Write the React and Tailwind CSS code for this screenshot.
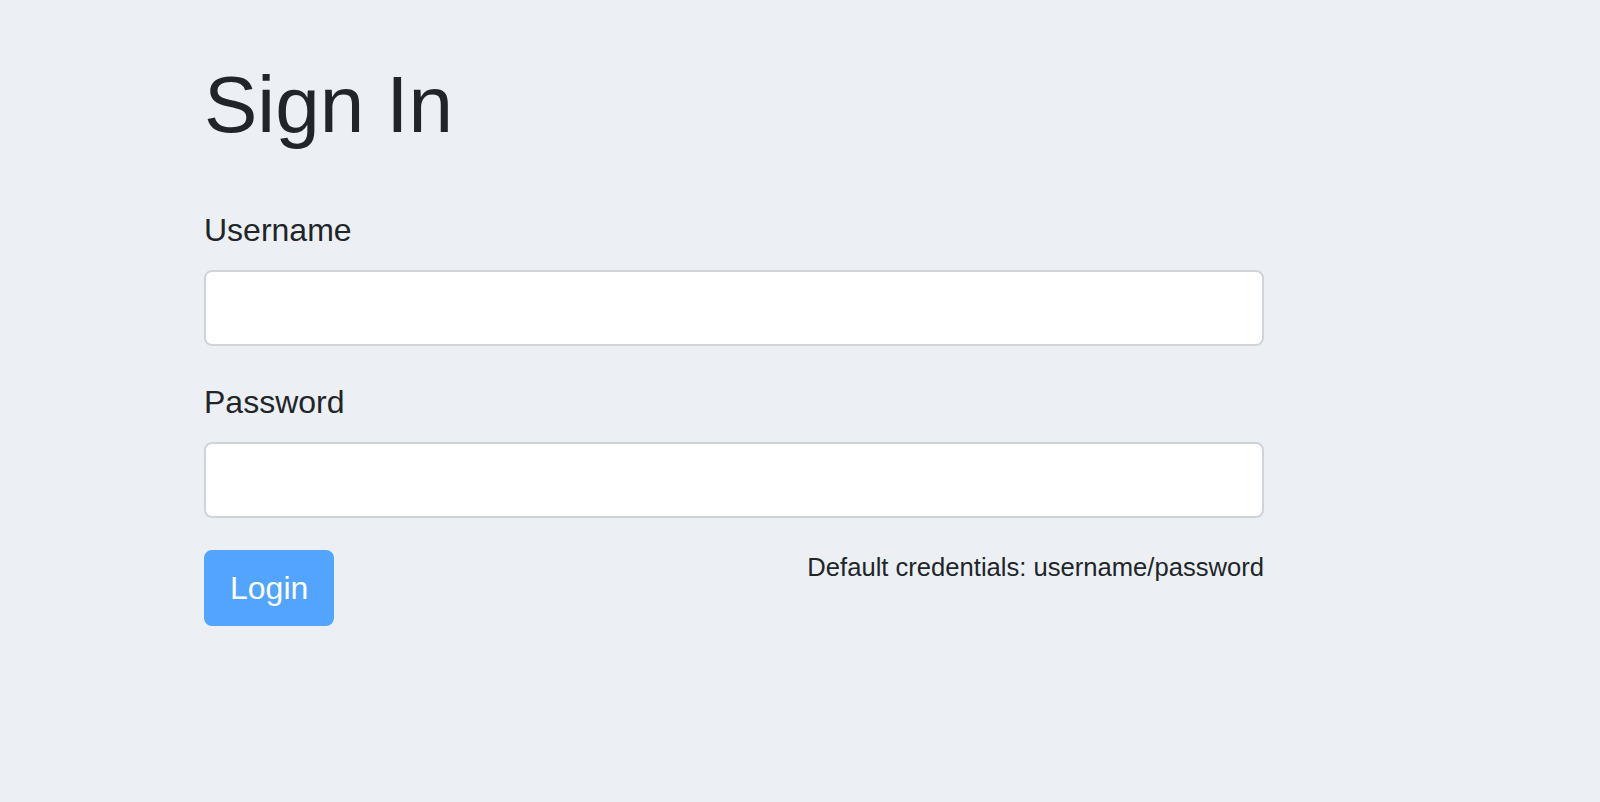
export default function App() {
  return (
    <div className="min-h-screen bg-[#ecf0f5] font-['Liberation_Sans',Arial,sans-serif] text-[#212529]">
      <div className="pl-[204px] pt-[57px]">
        <div className="w-[1060px]">
          <h1 className="text-[80px] leading-[96px] font-normal mb-[53px]">Sign In</h1>
          <form onSubmit={(e) => e.preventDefault()}>
            <div className="mb-[32px]">
              <label className="block text-[32px] leading-[48px] mb-[16px]">Username</label>
              <input
                type="text"
                className="block w-full h-[76px] bg-white border-2 border-[#ced4da] rounded-[8px] px-[24px] text-[32px] outline-none"
              />
            </div>
            <div className="mb-[32px]">
              <label className="block text-[32px] leading-[48px] mb-[16px]">Password</label>
              <input
                type="password"
                className="block w-full h-[76px] bg-white border-2 border-[#ced4da] rounded-[8px] px-[24px] text-[32px] outline-none"
              />
            </div>
            <div className="flex items-start justify-between">
              <button
                type="submit"
                disabled
                className="h-[76px] px-[24px] border-2 border-[#53a4fc] bg-[#53a4fc] text-white text-[32px] leading-[48px] rounded-[8px]"
              >
                Login
              </button>
              <small className="-mt-[2px] text-[25.6px] leading-[38.4px]">Default credentials: username/password</small>
            </div>
          </form>
        </div>
      </div>
    </div>
  );
}
